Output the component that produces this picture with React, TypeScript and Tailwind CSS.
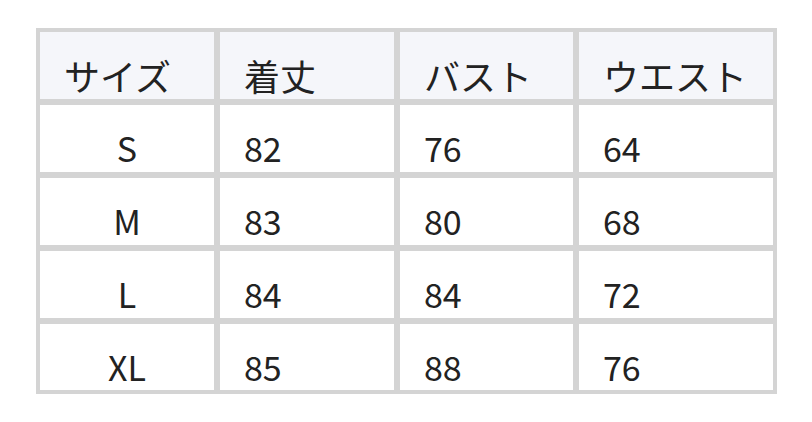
import React from "react";

const header = ["サイズ", "着丈", "バスト", "ウエスト"];
const rows = [
  ["S", "82", "76", "64"],
  ["M", "83", "80", "68"],
  ["L", "84", "84", "72"],
  ["XL", "85", "88", "76"],
];

export default function App() {
  return (
    <div
      className="w-[812px] h-[422px] bg-white pt-[28px] pl-[36px]"
      style={{ fontFamily: '"Noto Sans CJK JP", "Noto Sans", sans-serif' }}
    >
      <div className="inline-grid grid-cols-[174px_174px_173px_194px] grid-rows-[67px_67px_67px_67px_66px] gap-[6px] p-[4px] bg-[#d4d4d4] text-[#222222] text-[34px] leading-[34px] font-normal">
        {header.map((h) => (
          <div key={h} className="bg-[#f5f6fa] pt-[25px] pl-[24px] whitespace-nowrap text-[36px] leading-[36px]">
            {h}
          </div>
        ))}
        {rows.map((r) =>
          r.map((c, i) => (
            <div
              key={r[0] + i}
              className={
                i === 0
                  ? "bg-white pt-[26px] text-center"
                  : "bg-white pt-[26px] pl-[24px]"
              }
            >
              {c}
            </div>
          ))
        )}
      </div>
    </div>
  );
}
